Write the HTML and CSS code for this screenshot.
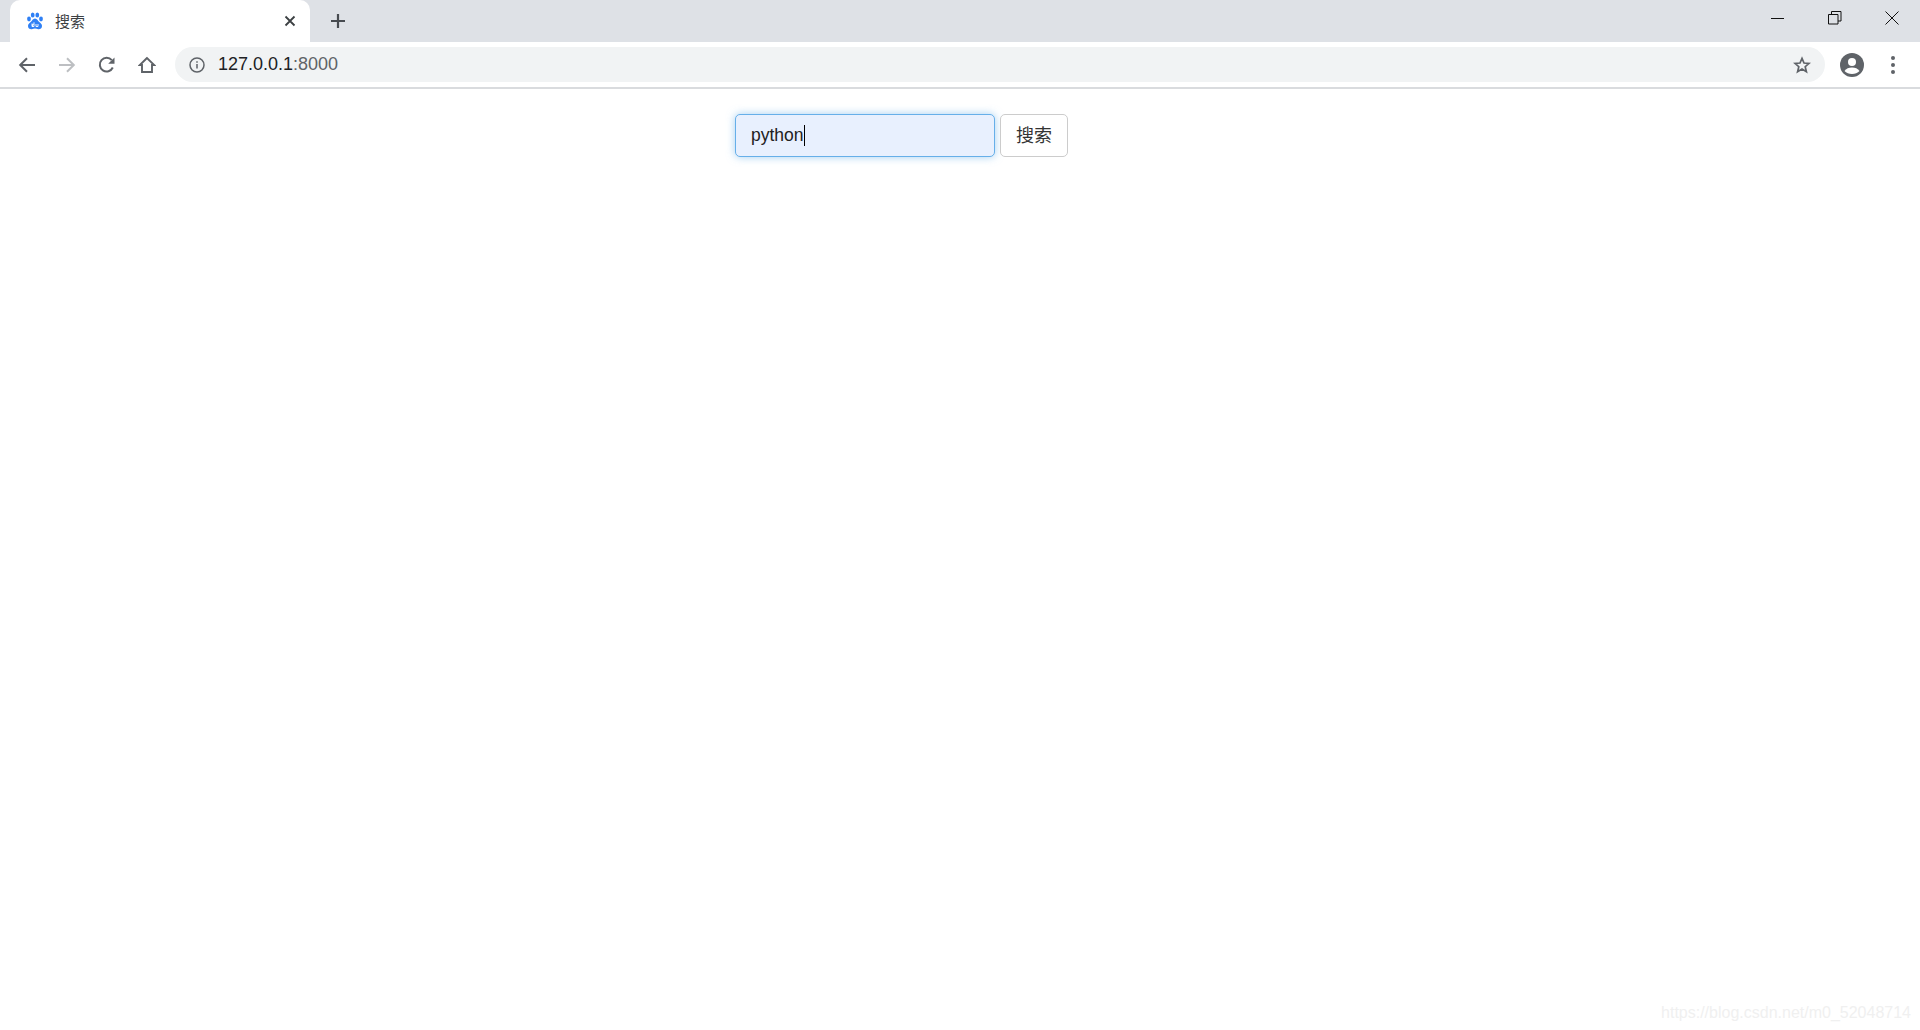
FILE: index.html
```html
<!DOCTYPE html>
<html lang="zh-CN">
<head>
<meta charset="UTF-8">
<title>搜索</title>
<link rel="stylesheet" href="styles.css">
</head>
<body>
<div class="tabstrip">
    <div class="tab">
        <svg class="favicon" width="18" height="18" viewBox="0 0 18 18">
            <ellipse cx="3" cy="7" rx="1.9" ry="2.4" fill="#2f80f5"/>
            <ellipse cx="6.7" cy="2.9" rx="1.9" ry="2.5" fill="#2f80f5"/>
            <ellipse cx="11.3" cy="2.9" rx="1.9" ry="2.5" fill="#2f80f5"/>
            <ellipse cx="15" cy="7" rx="1.9" ry="2.4" fill="#2f80f5"/>
            <path d="M9 6.5c-2.2 0-2.8 2.4-4.3 3.6C3 11.400 2 12.500 2 14c0 2.300 2 3.500 3.800 3.200 1.200-.2 2.200-.6 3.200-.6s2 .4 3.200.6c1.800.3 3.800-.9 3.800-3.200 0-1.500-1-2.600-2.700-3.900C11.800 8.900 11.200 6.500 9 6.500z" fill="#2f80f5"/>
            <path d="M6 11.500v3h2v-4.200M7.900 12.300H6.500v2.200M10 12v2.500h2V12" fill="none" stroke="#fff" stroke-width=".9"/>
        </svg>
        <span class="tab-title">搜索</span>
        <svg class="tab-close" width="12" height="12" viewBox="0 0 12 12">
            <path d="M1.500 1.500l9 9M10.500 1.500l-9 9" stroke="#3c4043" stroke-width="1.800" fill="none"/>
        </svg>
    </div>
    <svg class="new-tab" width="16" height="16" viewBox="0 0 16 16">
        <path d="M8 1v14M1 8h14" stroke="#474b50" stroke-width="2.200" fill="none"/>
    </svg>
    <div class="window-controls">
        <svg width="14" height="14" viewBox="0 0 14 14"><path d="M0 7.500h13" stroke="#111" fill="none"/></svg>
        <svg width="14" height="14" viewBox="0 0 14 14"><path d="M.5 3.500h9.500v9.500H.5zM3.500 3.500V.5H13v9.500h-3" stroke="#111" fill="none"/></svg>
        <svg width="14" height="14" viewBox="0 0 14 14"><path d="M.5.500l13 13M13.500.500l-13 13" stroke="#111" fill="none"/></svg>
    </div>
</div>
<div class="toolbar">
    <div class="nav-buttons">
        <svg width="18" height="18" viewBox="0 0 18 18"><path d="M17 9H2.500M9 2.200L2.200 9 9 15.800" stroke="#5f6368" stroke-width="2" fill="none"/></svg>
        <svg width="18" height="18" viewBox="0 0 18 18"><path d="M1 9h14.500M9 2.200L15.800 9 9 15.800" stroke="#bdbfc2" stroke-width="2" fill="none"/></svg>
        <svg width="18" height="18" viewBox="0 0 18 18"><path d="M14.800 11.500A6.800 6.800 0 1 1 13.800 4.200" stroke="#5f6368" stroke-width="2" fill="none"/><path d="M16.500 1.500v6.300h-6.300z" fill="#5f6368"/></svg>
        <svg width="18" height="18" viewBox="0 0 18 18"><path d="M9 2L1.800 9H4v7h10V9h2.200zM4 9" stroke="#5f6368" stroke-width="1.900" fill="none"/></svg>
    </div>
    <div class="omnibox">
        <svg class="info-icon" width="16" height="16" viewBox="0 0 16 16">
            <circle cx="8" cy="8" r="7" stroke="#5f6368" stroke-width="1.500" fill="none"/>
            <path d="M8 7v4.500M8 4.300v1.500" stroke="#5f6368" stroke-width="1.500" fill="none"/>
        </svg>
        <span class="url">127.0.0.1<span class="url-port">:8000</span></span>
        <svg class="star" width="18" height="18" viewBox="0 0 18 18">
            <path d="M9 2.300l2 4.700 5 .4-3.800 3.300 1.200 5L9 13l-4.400 2.700 1.200-5L2 7.400l5-.4z" stroke="#5f6368" stroke-width="1.700" fill="none"/>
        </svg>
    </div>
    <svg class="avatar" width="24" height="24" viewBox="0 0 24 24">
        <circle cx="12" cy="12" r="12" fill="#5f6368"/>
        <circle cx="12" cy="9" r="4" fill="#fff"/>
        <path d="M4.500 18c1.500-2.500 4.500-3.500 7.500-3.500s6 1 7.500 3.500c-1.800 2-4.500 3-7.500 3s-5.700-1-7.500-3z" fill="#fff"/>
    </svg>
    <div class="menu-dots"><i></i><i></i><i></i></div>
</div>
<div class="page">
    <form class="search-form">
        <div class="search-input">python<span class="caret"></span></div>
        <button type="button" class="search-btn">搜索</button>
    </form>
    <div class="watermark">https://blog.csdn.net/m0_52048714</div>
</div>
</body>
</html>
```

FILE: styles.css
```css
html, body {
    margin: 0;
    height: 100%;
    overflow: hidden;
}

body {
    display: flex;
    flex-direction: column;
    background-color: #fff;
    font-family: "Liberation Sans", "Noto Sans CJK SC", sans-serif;
    color: #333;
}

.tabstrip {
    display: flex;
    align-items: center;
    height: 42px;
    padding-left: 10px;
    background-color: #dee1e6;
}

.tab {
    display: flex;
    align-items: center;
    box-sizing: border-box;
    width: 300px;
    height: 42px;
    padding: 0 14px 0 16px;
    background-color: #fff;
    border-radius: 10px 10px 0 0;
}

.favicon {
    margin-right: 11px;
}

.tab-title {
    flex: 1;
    padding-bottom: 2px;
    font-size: 15px;
    color: #3c4043;
}

.new-tab {
    margin-left: 20px;
}

.window-controls {
    display: flex;
    gap: 43px;
    margin-left: auto;
    margin-right: 21px;
    margin-top: -6px;
}

.toolbar {
    display: flex;
    align-items: center;
    box-sizing: border-box;
    height: 47px;
    background-color: #fff;
    border-bottom: 2px solid #d9dbde;
}

.nav-buttons {
    display: flex;
    gap: 22px;
    padding-left: 18px;
    width: 175px;
    box-sizing: border-box;
}

.omnibox {
    display: flex;
    align-items: center;
    box-sizing: border-box;
    width: 1650px;
    height: 35px;
    padding: 0 14px;
    background-color: #f1f3f4;
    border-radius: 18px;
}

.info-icon {
    margin-right: 13px;
}

.url {
    flex: 1;
    font-size: 18px;
    color: #202124;
}

.url-port {
    color: #5f6368;
}

.avatar {
    margin-left: 15px;
}

.menu-dots {
    display: flex;
    flex-direction: column;
    gap: 3px;
    margin-left: 27px;
}

.menu-dots i {
    width: 4px;
    height: 4px;
    border-radius: 50%;
    background-color: #5f6368;
}

.page {
    flex: 1;
    position: relative;
    padding: 25px 0 0 735px;
}

.search-form {
    display: flex;
    gap: 5px;
}

.search-input {
    display: flex;
    align-items: center;
    box-sizing: border-box;
    width: 260px;
    height: 43px;
    padding: 0 15px;
    background-color: #e8f0fe;
    border: 1px solid #66afe9;
    border-radius: 5px;
    box-shadow: 0 0 8px rgba(102, 175, 233, 0.6);
    font-size: 17.5px;
    color: #222;
}

.caret {
    width: 1px;
    height: 21px;
    background-color: #000;
}

.search-btn {
    box-sizing: border-box;
    width: 68px;
    height: 43px;
    padding: 0 0 4px;
    background-color: #fff;
    border: 1px solid #ccc;
    border-radius: 5px;
    font-family: inherit;
    font-size: 18px;
    color: #333;
}

.watermark {
    position: absolute;
    right: 9px;
    bottom: 8px;
    font-size: 16px;
    color: #f0f0f0;
}
```
